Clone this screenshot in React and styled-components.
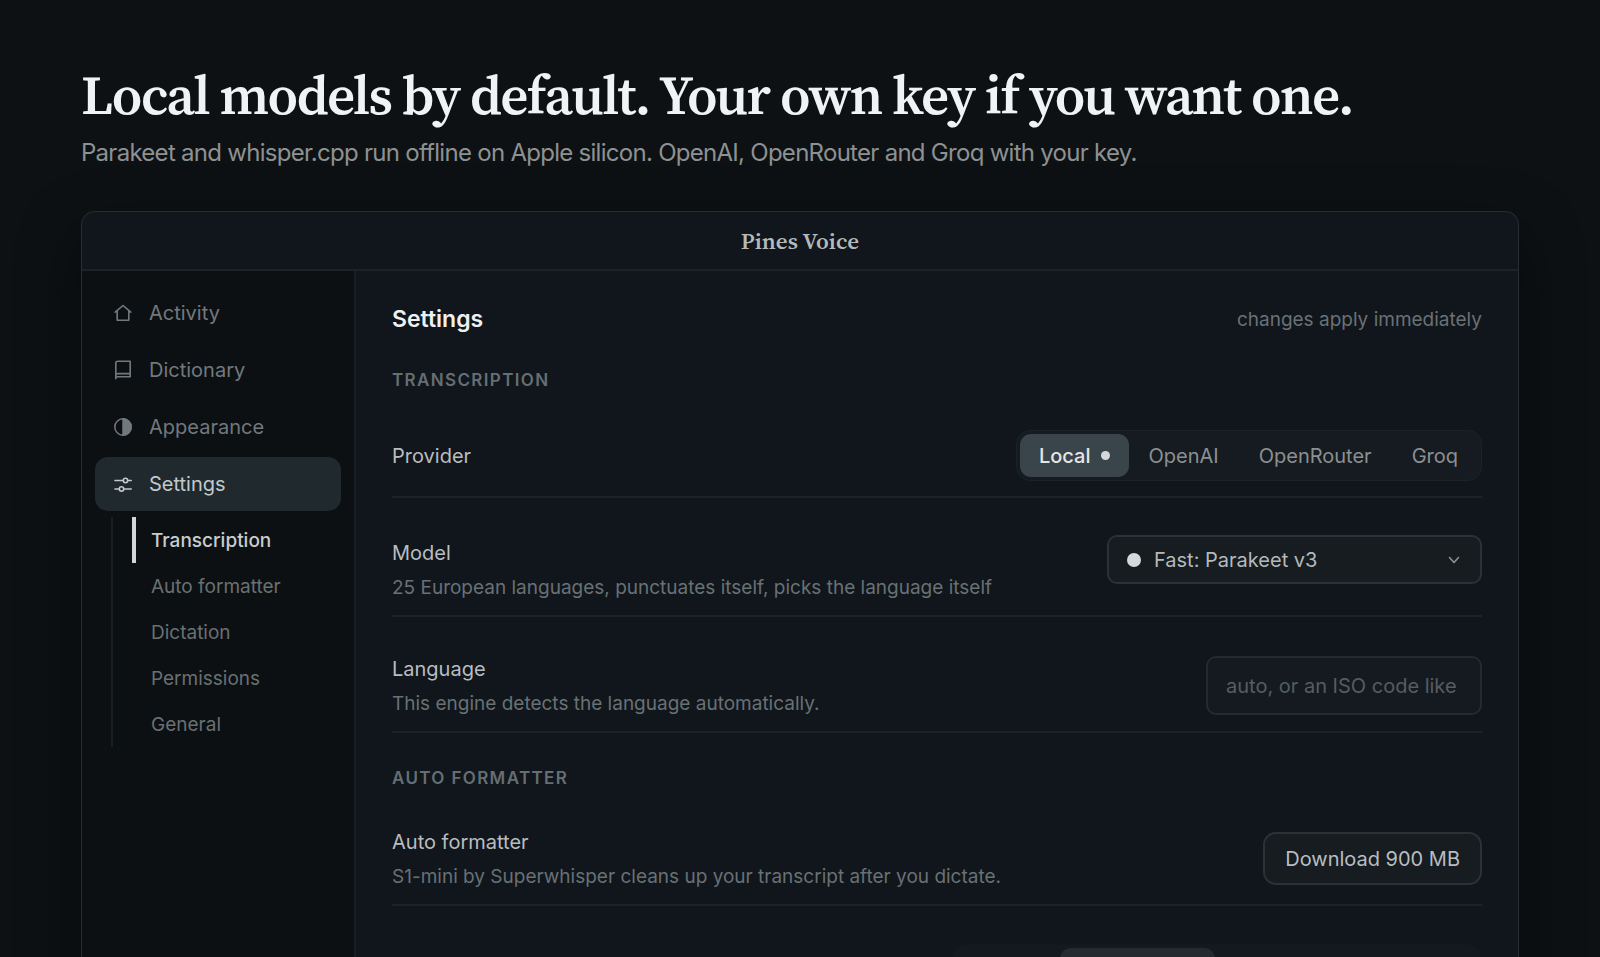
import React, { useState } from 'react';
import styled, { createGlobalStyle } from 'styled-components';

const sans = `Inter, 'Liberation Sans', sans-serif`;
const serif = `'Source Serif 4', 'Source Serif Pro', 'Liberation Serif', serif`;

const GlobalStyle = createGlobalStyle`
  *, *::before, *::after {
    box-sizing: border-box;
  }

  html, body, #root {
    height: 100%;
  }

  body {
    margin: 0;
    background: #0d1114;
    color: #c3c7ca;
    font-family: ${sans};
    -webkit-font-smoothing: antialiased;
  }

  button, input, select {
    font: inherit;
    color: inherit;
  }
`;

// ─── Page ───
const Page = styled.main`
  height: 100%;
  overflow: hidden;
  display: flex;
  flex-direction: column;
  padding: 63px 81px 0;
`;

const Headline = styled.h1`
  font-family: ${serif};
  font-size: 55px;
  font-weight: 600;
  line-height: 64px;
  letter-spacing: -0.03em;
  color: #f0f2f3;
  margin: 0;
`;

const Lede = styled.p`
  font-size: 24px;
  line-height: 32px;
  letter-spacing: -0.03em;
  color: #8e9192;
  margin: 10px 0 42px;
`;

// ─── App window ───
const Window = styled.section`
  flex: 1 0 auto;
  display: flex;
  flex-direction: column;
  border: 1px solid #262d30;
  border-bottom: 0;
  border-radius: 14px 14px 0 0;
  background: #10161b;
  box-shadow: 0 24px 64px rgba(0, 0, 0, 0.45);
  overflow: hidden;
`;

const TitleBar = styled.header`
  height: 59px;
  display: flex;
  align-items: center;
  justify-content: center;
  border-bottom: 2px solid #1c2327;
  font-family: ${serif};
  font-size: 23px;
  font-weight: 600;
  color: #b4b9bc;
`;

const Body = styled.div`
  flex: 1;
  display: flex;
`;

// ─── Sidebar ───
const Sidebar = styled.nav`
  flex: 0 0 274px;
  padding: 15px 13px;
  background: #0c1012;
  border-right: 2px solid #171e24;
`;

const NavList = styled.ul`
  list-style: none;
  margin: 0;
  padding: 0;
  display: flex;
  flex-direction: column;
  gap: 3px;
`;

const NavLink = styled.a`
  display: flex;
  align-items: center;
  gap: 16px;
  height: 54px;
  padding: 0 18px;
  border-radius: 13px;
  font-size: 20px;
  text-decoration: none;
  color: ${p => (p.$active ? '#c3c9cd' : '#72797e')};
  background: ${p => (p.$active ? '#20292e' : 'transparent')};

  svg {
    width: 20px;
    height: 20px;
    flex: none;
  }
`;

const SubList = styled.ul`
  list-style: none;
  margin: 6px 0 0 16px;
  padding: 0 0 0 19px;
  border-left: 2px solid #181f22;
  display: flex;
  flex-direction: column;
`;

const SubLink = styled.a`
  display: flex;
  align-items: center;
  height: 46px;
  padding-left: 15px;
  border-left: 4px solid ${p => (p.$active ? '#d3d6d9' : 'transparent')};
  font-size: 19px;
  font-weight: ${p => (p.$active ? 500 : 400)};
  text-decoration: none;
  color: ${p => (p.$active ? '#c9cccf' : '#697073')};
`;

// ─── Settings panel ───
const Panel = styled.div`
  flex: 1;
  min-width: 0;
  padding: 30px 36px 0;
`;

const PanelHeader = styled.div`
  display: flex;
  align-items: center;
  justify-content: space-between;
  height: 36px;
`;

const PanelTitle = styled.h2`
  font-size: 23px;
  font-weight: 600;
  color: #eef0f1;
  margin: 0;
`;

const PanelHint = styled.span`
  font-size: 19px;
  color: #6a7176;
`;

const GroupTitle = styled.h3`
  font-size: 17px;
  font-weight: 600;
  line-height: 24px;
  letter-spacing: 0.08em;
  text-transform: uppercase;
  color: #666e74;
  margin: 0;
  padding: ${p => (p.$first ? '31px 0 20px' : '33px 0 18px')};
`;

const Row = styled.div`
  display: flex;
  align-items: ${p => (p.$center ? 'center' : 'flex-end')};
  justify-content: space-between;
  gap: 24px;
  padding: ${p => p.$pad};
  border-bottom: 2px solid #1c2327;
`;

const RowText = styled.div`
  display: flex;
  flex-direction: column;
  gap: 7px;
`;

const RowLabel = styled.label`
  font-size: 20px;
  line-height: 28px;
  color: #b9bdc0;
`;

const RowNote = styled.span`
  font-size: 19px;
  line-height: 28px;
  color: #687175;
`;

const Segmented = styled.div`
  display: flex;
  padding: 3px;
  margin-left: auto;
  border: 1px solid ${p => (p.$quiet ? '#12181d' : '#1b2327')};
  border-radius: 14px;
  background: ${p => (p.$quiet ? '#13191e' : '#151b20')};
`;

const Segment = styled.button`
  display: flex;
  align-items: center;
  gap: 10px;
  height: 43px;
  min-width: ${p => (p.$width ? `${p.$width}px` : 'auto')};
  padding: 0 ${p => (p.$active ? 19 : 20)}px;
  border: 0;
  border-radius: 11px;
  font-size: 20px;
  font-weight: ${p => (p.$active ? 500 : 400)};
  color: ${p => (p.$active ? '#e3e6e8' : '#8b9093')};
  background: ${p => (p.$active ? (p.$quiet ? '#242b2f' : '#3a444b') : 'transparent')};
`;

const Dot = styled.span`
  flex: none;
  width: ${p => p.$size}px;
  height: ${p => p.$size}px;
  border-radius: 50%;
  background: #d5d9dc;
`;

const SelectBox = styled.div`
  display: flex;
  align-items: center;
  gap: 13px;
  width: 375px;
  height: 49px;
  margin-bottom: 18px;
  padding: 0 17px 0 18px;
  border: 2px solid #2a3236;
  border-radius: 10px;
  background: #161c20;

  svg {
    width: 18px;
    height: 18px;
    flex: none;
  }
`;

const Select = styled.select`
  flex: 1;
  min-width: 0;
  padding: 0;
  border: 0;
  outline: 0;
  appearance: none;
  background: transparent;
  font-size: 20px;
  color: #b4b9bc;
`;

const TextInput = styled.input`
  width: 276px;
  height: 59px;
  margin-bottom: 3px;
  padding: 0 18px;
  border: 2px solid #232b2f;
  border-radius: 10px;
  outline: 0;
  background: #141a1f;
  font-size: 20px;

  &::placeholder {
    color: #565d61;
    opacity: 1;
  }
`;

const Button = styled.button`
  height: 53px;
  margin-bottom: 6px;
  padding: 0 20px;
  border: 2px solid #2a3236;
  border-radius: 13px;
  background: #161c20;
  font-size: 20px;
  color: #b9bdc0;
`;

// ─── Icons ───
const HomeIcon = () => (
  <svg viewBox="0 0 20 20" fill="none" stroke="currentColor" strokeWidth="1.6" strokeLinejoin="round" strokeLinecap="round">
    <path d="M2.200 9.200 10 2.500l7.800 6.700M4.200 7.800v9.400h11.600V7.800" />
  </svg>
);

const BookIcon = () => (
  <svg viewBox="0 0 20 20" fill="none" stroke="currentColor" strokeWidth="1.6" strokeLinejoin="round" strokeLinecap="round">
    <path d="M2.800 18.800V3.200a2 2 0 0 1 2-2h12.400v15.600H4.800a2 2 0 0 0-2 2M17.200 13.600H4.800a2 2 0 0 0-2 2" />
  </svg>
);

const ContrastIcon = () => (
  <svg viewBox="0 0 20 20" fill="none" stroke="currentColor" strokeWidth="1.5">
    <circle cx="10" cy="10" r="8.200" />
    <path d="M10 1.800a8.200 8.200 0 0 1 0 16.400z" fill="currentColor" />
  </svg>
);

const SlidersIcon = () => (
  <svg viewBox="0 0 20 20" fill="none" stroke="currentColor" strokeWidth="1.6" strokeLinecap="round">
    <path d="M2 6.500h8M15 6.500h3.200M2 15h4M11 15h7.200" />
    <circle cx="12.500" cy="6.500" r="2.200" />
    <circle cx="8.500" cy="15" r="2.200" />
  </svg>
);

const ChevronIcon = () => (
  <svg viewBox="0 0 18 18" fill="none" stroke="#8b9093" strokeWidth="1.6" strokeLinecap="round" strokeLinejoin="round">
    <path d="M4.500 6.500 9 11.500l4.500-5" />
  </svg>
);

const navItems = [
  { label: 'Activity', icon: HomeIcon },
  { label: 'Dictionary', icon: BookIcon },
  { label: 'Appearance', icon: ContrastIcon },
  { label: 'Settings', icon: SlidersIcon, active: true },
];

const sections = ['Transcription', 'Auto formatter', 'Dictation', 'Permissions', 'General'];
const providers = ['Local', 'OpenAI', 'OpenRouter', 'Groq'];
const strengths = [
  { label: 'Off', width: 105 },
  { label: 'Light', width: 155, active: true },
  { label: 'Medium', width: 132 },
  { label: 'Strong', width: 131 },
];

const App = () => {
  const [section, setSection] = useState('Transcription');
  const [provider, setProvider] = useState('Local');

  return (
    <Page>
      <GlobalStyle />
      <Headline>Local models by default. Your own key if you want one.</Headline>
      <Lede>Parakeet and whisper.cpp run offline on Apple silicon. OpenAI, OpenRouter and Groq with your key.</Lede>

      <Window>
        <TitleBar>Pines Voice</TitleBar>
        <Body>
          <Sidebar>
            <NavList>
              {navItems.map(({ label, icon: Icon, active }) => (
                <li key={label}>
                  <NavLink href="#" $active={active}>
                    <Icon />
                    {label}
                  </NavLink>
                </li>
              ))}
            </NavList>
            <SubList>
              {sections.map(name => (
                <li key={name}>
                  <SubLink href="#" $active={name === section} onClick={() => setSection(name)}>
                    {name}
                  </SubLink>
                </li>
              ))}
            </SubList>
          </Sidebar>

          <Panel>
            <PanelHeader>
              <PanelTitle>Settings</PanelTitle>
              <PanelHint>changes apply immediately</PanelHint>
            </PanelHeader>

            <GroupTitle $first>Transcription</GroupTitle>
            <Row $center $pad="18px 0 15px">
              <RowLabel as="span">Provider</RowLabel>
              <Segmented role="group" aria-label="Provider">
                {providers.map(name => (
                  <Segment key={name} type="button" $active={name === provider} onClick={() => setProvider(name)}>
                    {name}
                    {name === provider && <Dot $size={9} />}
                  </Segment>
                ))}
              </Segmented>
            </Row>

            <Row $pad="37px 0 13px">
              <RowText>
                <RowLabel htmlFor="model">Model</RowLabel>
                <RowNote>25 European languages, punctuates itself, picks the language itself</RowNote>
              </RowText>
              <SelectBox>
                <Dot $size={14} />
                <Select id="model" defaultValue="parakeet">
                  <option value="parakeet">Fast: Parakeet v3</option>
                </Select>
                <ChevronIcon />
              </SelectBox>
            </Row>

            <Row $pad="38px 0 13px">
              <RowText>
                <RowLabel htmlFor="language">Language</RowLabel>
                <RowNote>This engine detects the language automatically.</RowNote>
              </RowText>
              <TextInput id="language" type="text" placeholder="auto, or an ISO code like" />
            </Row>

            <GroupTitle>Auto formatter</GroupTitle>
            <Row $pad="20px 0 13px">
              <RowText>
                <RowLabel as="span">Auto formatter</RowLabel>
                <RowNote>S1-mini by Superwhisper cleans up your transcript after you dictate.</RowNote>
              </RowText>
              <Button type="button">Download 900 MB</Button>
            </Row>

            <Row $center $pad="38px 0 15px">
              <Segmented $quiet role="group" aria-label="Formatting strength">
                {strengths.map(({ label, width, active }) => (
                  <Segment key={label} type="button" aria-label={label} $quiet $width={width} $active={active} />
                ))}
              </Segmented>
            </Row>
          </Panel>
        </Body>
      </Window>
    </Page>
  );
};

export default App;
